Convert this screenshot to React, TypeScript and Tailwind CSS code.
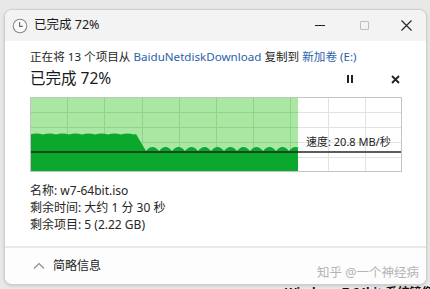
import React from "react";

const font = {
  fontFamily: '"Noto Sans", "Noto Sans CJK SC", sans-serif',
};

// bumps for the dark green speed area
const buildArea = () => {
  let d = "M0,75 L0,37.5";
  for (let x = 0; x < 104; x += 13) {
    d += ` Q${x + 6.5},35.5 ${x + 13},37.5`;
  }
  d += " L106,37 L116,54";
  for (let x = 116; x < 266; x += 13) {
    d += ` Q${x + 6.5},46 ${x + 13},54`;
  }
  d += " L268,50 L268,75 Z";
  return d;
};

const Graph = () => {
  const vLines = [37, 74, 112, 149, 186, 223, 260, 298, 335];
  const hLines = [15, 30, 45, 60];
  return (
    <div className="relative w-[372px] h-[75px] mt-[7px]">
      <svg width="372" height="75" viewBox="0 0 372 75" className="block">
        <rect x="0" y="0" width="372" height="75" fill="#ffffff" />
        <rect x="0" y="0" width="268" height="75" fill="#a9e7a2" />
        {vLines.map((x) => (
          <line
            key={x}
            x1={x + 0.5}
            y1="0"
            x2={x + 0.5}
            y2="75"
            stroke={x < 268 ? "#8fd488" : "#e2e2e2"}
            strokeWidth="1"
          />
        ))}
        {hLines.map((y) => (
          <g key={y}>
            <line x1="0" y1={y + 0.5} x2="268" y2={y + 0.5} stroke="#8fd488" />
            <line x1="268" y1={y + 0.5} x2="372" y2={y + 0.5} stroke="#e2e2e2" />
          </g>
        ))}
        <path d={buildArea()} fill="#0aa82c" />
        <line x1="0" y1="55" x2="372" y2="55" stroke="#1f2a1f" strokeWidth="1.6" />
        <rect x="0.5" y="0.5" width="371" height="74" fill="none" stroke="#c4c4c4" />
      </svg>
      <div className="absolute left-[276px] top-[37px] text-[11px] leading-[16px] text-[#222]">
        速度: 20.8 MB/秒
      </div>
    </div>
  );
};

export default function App() {
  return (
    <div
      className="relative w-[430px] h-[289px] overflow-hidden bg-[#e8e8e8] pt-[9px] pl-[4px]"
      style={font}
    >
      <div className="w-[423px] h-[276px] rounded-[8px] border border-[#cfcfcf] bg-white overflow-hidden flex flex-col shadow-[0_1px_3px_rgba(0,0,0,0.15)]">
        {/* title bar */}
        <div className="h-[31px] bg-[#f3f3f3] flex items-center shrink-0">
          <svg width="16" height="16" viewBox="0 0 16 16" className="ml-[7px]">
            <circle cx="8" cy="8" r="6.8" fill="#fafafa" stroke="#8a8a8a" strokeWidth="1.1" />
            <path d="M7.6 4 V8.4 H10.8" fill="none" stroke="#6a6a6a" strokeWidth="1.1" />
          </svg>
          <span className="ml-[6px] text-[12.5px] text-[#1b1b1b]">已完成 72%</span>
          <div className="ml-auto flex items-center h-full">
            <div className="w-[44px] flex justify-center">
              <div className="w-[10px] h-px bg-[#222]" />
            </div>
            <div className="w-[44px] flex justify-center">
              <div className="w-[9px] h-[9px] border border-[#bdbdbd] rounded-[1px]" />
            </div>
            <div className="w-[40px] flex justify-center">
              <svg width="11" height="11" viewBox="0 0 11 11">
                <path d="M0.5 0.5 L10.5 10.5 M10.5 0.5 L0.5 10.5" stroke="#222" strokeWidth="1.1" />
              </svg>
            </div>
          </div>
        </div>

        {/* body */}
        <div className="pl-[25px] flex flex-col">
          <div className="mt-[7px] h-[18px] flex items-center text-[11.6px] text-[#1e1e1e] whitespace-nowrap">
            正在将 13 个项目从&nbsp;
            <span className="text-[#2a62a8]">BaiduNetdiskDownload</span>
            &nbsp;复制到&nbsp;
            <span className="text-[#2a62a8]">新加卷 (E:)</span>
          </div>
          <div className="mt-[2px] h-[22px] flex items-center">
            <span className="text-[15.5px] text-[#1a1a1a]">已完成 72%</span>
            <div className="ml-auto flex items-center mr-[26px]">
              <div className="flex gap-[2px]">
                <div className="w-[2px] h-[8px] bg-[#222]" />
                <div className="w-[2px] h-[8px] bg-[#222]" />
              </div>
              <svg width="9" height="9" viewBox="0 0 9 9" className="ml-[38px]">
                <path d="M1 1 L8 8 M8 1 L1 8" stroke="#222" strokeWidth="1.8" />
              </svg>
            </div>
          </div>

          <Graph />

          <div className="mt-[10px] flex flex-col text-[12px] leading-[17px] text-[#262626]">
            <div>名称: w7-64bit.iso</div>
            <div>剩余时间: 大约 1 分 30 秒</div>
            <div>剩余项目: 5 (2.22 GB)</div>
          </div>
        </div>

        <div className="mt-[13px] h-[2px] bg-[#e9e9e9] shrink-0" />

        {/* footer */}
        <div className="flex-1 flex items-center pl-[28px] pr-[7px] bg-[#fdfdfd]">
          <svg width="12" height="8" viewBox="0 0 12 8">
            <path d="M1 6.5 L6 1.5 L11 6.5" fill="none" stroke="#8a8a8a" strokeWidth="1.1" />
          </svg>
          <span className="ml-[8px] text-[12px] text-[#1e1e1e]">简略信息</span>
          <span className="ml-auto mt-[14px] text-[12.5px] text-[#b4b4b4]">知乎 @一个神经病</span>
        </div>
      </div>
      <div className="absolute left-[285px] top-[286px] text-[12px] font-bold text-[#111] leading-[14px] whitespace-nowrap">
        Windows 7 64bit 系统镜像
      </div>
    </div>
  );
}
